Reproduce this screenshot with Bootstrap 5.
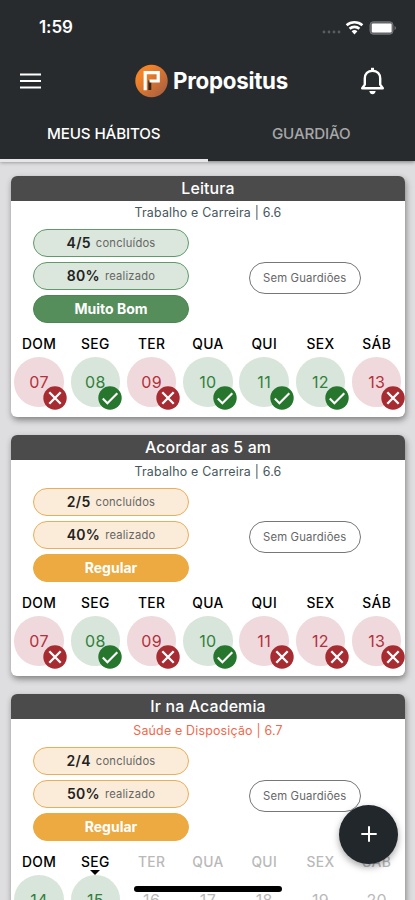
<!DOCTYPE html>
<html lang="pt-BR">
<head>
<meta charset="utf-8">
<meta name="viewport" content="width=device-width, initial-scale=1">
<title>Propositus</title>
<link href="https://cdn.jsdelivr.net/npm/bootstrap@5.3.0/dist/css/bootstrap.min.css" rel="stylesheet">
<style>
html, body { height: 100%; overflow: hidden; }
body { font-family: Inter, "Liberation Sans", sans-serif; background: #dedddf; color: #222; line-height: 1; }
.screen { height: 900px; width: 415px; overflow: hidden; }
.topbar { background: #282b2e; height: 161px; box-shadow: 0 1px 4px rgba(0,0,0,.45); color: #fff; z-index: 2; }
.status { height: 55px; padding: 0 19px 0 39px; }
.clock { font-size: 17px; font-weight: 600; letter-spacing: -.1px; }
.brandrow { height: 52px; padding: 0 30px 0 20px; }
.brand { margin-left: 22px; gap: 5px; }
.brandname { font-size: 22.3px; font-weight: 700; letter-spacing: -.25px; }
.tabs { height: 55px; }
.tab-item { width: 208px; font-size: 15.2px; font-weight: 500; padding-top: 1px; border-bottom: 3px solid transparent; color: #a6a7a8; letter-spacing: -.15px; }
.tab-item.on { color: #fff; border-bottom-color: #e6e5e7; }
.feed { padding: 14.5px 10px 0 11px; gap: 17.5px; }
.habit { height: 241.5px; border-radius: 6px; background: #fff; box-shadow: 1px 3px 6px rgba(0,0,0,.42); flex: none; }
.habit-title { height: 25.5px; padding-top: 1px; background: #4b4b4c; color: #fff; border-radius: 6px 6px 0 0; font-size: 15.9px; font-weight: 500; letter-spacing: .15px; }
.habit-area { height: 22px; padding-top: 2px; font-size: 12.4px; letter-spacing: .2px; color: #46575c; }
.habit-area.health { color: #f0694c; }
.stats { height: 93.5px; margin-top: 6px; }
.pills { width: 156px; margin-left: 22px; gap: 5px; }
.pill { height: 28px; border-radius: 14px; border: 1px solid; font-size: 11.2px; gap: 5px; letter-spacing: .2px; color: #666; }
.pill span { padding-top: 1px; }
.pill b { font-size: 14px; font-weight: 600; color: #222; letter-spacing: .3px; }
.pill.level { color: #fff; font-size: 14px; font-weight: 700; letter-spacing: 0; }
.green .pill { background: #dbe6dc; border-color: #5f9a69; }
.green .pill.level { background: #558d5b; border-color: #4b8752; }
.amber .pill { background: #fbecd9; border-color: #ebad5a; }
.amber .pill.level { background: #ecaa40; border-color: #ecaa40; }
.guard { width: 112.5px; height: 32px; border-radius: 16px; border: 1px solid #777; margin-left: 59.5px; margin-top: 5px; font-size: 11.3px; letter-spacing: .15px; color: #666; }
.days { margin-top: 14.4px; }
.day { width: 56.28px; font-size: 14px; letter-spacing: .35px; }
.day-name { height: 16px; font-weight: 500; font-size: 13.8px; }
.disc { width: 49.5px; height: 49.5px; margin-top: 4.6px; font-size: 16px; }
.done .disc { background: #d8e5da; color: #31803a; }
.miss .disc { background: #efd9dc; color: #b3303c; }
.idle { color: #b9b9b9; }
.flag { width: 24px; height: 24px; right: -3.5px; bottom: -3px; }
.day:nth-child(2) .flag { right: -1.7px; }
.day:nth-child(4) .flag { right: -4px; }
.day:nth-child(5) .flag { right: -4.7px; }
.today { left: 50%; bottom: -4px; margin-left: -5px; width: 10px; height: 5px; }
.fab { left: 339px; top: 804.5px; width: 59px; height: 59px; background: #22272b; box-shadow: 0 3px 7px rgba(0,0,0,.35); z-index: 3; }
.homebar { left: 134px; top: 886px; width: 148px; height: 5.5px; background: #000; z-index: 4; }
</style>
<script src="https://cdn.jsdelivr.net/npm/bootstrap@5.3.0/dist/js/bootstrap.bundle.min.js"></script>
</head>
<body>
<svg width="0" height="0" class="position-absolute">
  <symbol id="check" viewBox="0 0 24 24"><circle cx="12" cy="12" r="11.7" fill="#26762d"/><path d="M4.8 12.6l4.6 4.7L19.3 7.2" fill="none" stroke="#fff" stroke-width="2.1"/></symbol>
  <symbol id="cross" viewBox="0 0 24 24"><circle cx="12" cy="12" r="11.7" fill="#a62c31"/><path d="M6.3 6.3l11.4 11.4M17.7 6.3L6.3 17.7" fill="none" stroke="#fff" stroke-width="2.3"/></symbol>
</svg>
<div class="screen position-relative d-flex flex-column">
  <header class="topbar position-relative flex-shrink-0">
    <div class="status d-flex align-items-center justify-content-between">
      <span class="clock">1:59</span>
      <svg width="76" height="18" viewBox="0 0 76 18">
        <g fill="#5a5d5f"><circle cx="4" cy="13" r="1.4"/><circle cx="9" cy="13" r="1.4"/><circle cx="14" cy="13" r="1.4"/><circle cx="19" cy="13" r="1.4"/></g>
        <g fill="none" stroke="#fff" stroke-width="2.6"><path d="M26.6 6.2a12 12 0 0 1 15.8 0"/><path d="M29.6 9.8a7.2 7.2 0 0 1 9.8 0"/></g>
        <path d="M31.6 12.2a4.4 4.4 0 0 1 5.8 0L34.5 15.5z" fill="#fff"/>
        <rect x="50" y="2.8" width="23" height="12.4" rx="3.2" fill="#606365" stroke="#737577"/><rect x="51.8" y="4.5" width="19.8" height="9" rx="1.2" fill="#fff"/><path d="M74.600 7v4q1.200-.6 1.200-2t-1.200-2z" fill="#808284"/>
      </svg>
    </div>
    <div class="brandrow d-flex align-items-center justify-content-between">
      <svg width="21" height="16" viewBox="0 0 21 16" stroke="#fff" stroke-width="2"><path d="M0 1.500h21M0 8h21M0 14.500h21"/></svg>
      <div class="brand d-flex align-items-center">
        <svg width="33" height="34" viewBox="0 0 33 34">
          <defs><linearGradient id="og" x1="0" y1="0" x2="1" y2="1"><stop offset=".25" stop-color="#f38328"/><stop offset=".8" stop-color="#b5653d"/></linearGradient></defs>
          <circle cx="16.5" cy="17" r="16.2" fill="url(#og)"/>
          <path d="M14.800 26V16.500" fill="none" stroke="#3a2518" stroke-width="3"/>
          <path d="M10.200 26.300V8.700H23.200V17H14.500" fill="none" stroke="#fff" stroke-width="3.200"/>
        </svg>
        <span class="brandname">Propositus</span>
      </div>
      <svg width="25" height="28" viewBox="0 0 25 28" fill="none" stroke="#fff" stroke-width="2.4"><path d="M2.200 21.200h20.600l-2.600-3.600V11.500c0-4.500-3-7.800-7.700-7.800s-7.700 3.300-7.700 7.800v6.100z" stroke-linejoin="round"/><path d="M12.500.8v3" stroke-width="3"/><path d="M9.300 24h6.400q-.8 3.200-3.200 3.200T9.300 24z" fill="#fff" stroke="none"/></svg>
    </div>
    <nav class="tabs d-flex">
      <div class="tab-item on d-flex align-items-center justify-content-center">MEUS HÁBITOS</div>
      <div class="tab-item d-flex align-items-center justify-content-center">GUARDIÃO</div>
    </nav>
  </header>
  <main class="feed d-flex flex-column" id="feed"></main>
  <button class="fab btn rounded-circle border-0 p-0 position-absolute d-flex align-items-center justify-content-center" aria-label="+">
    <svg width="18" height="18" viewBox="0 0 18 18" stroke="#fff" stroke-width="2"><path d="M9 1.300v15.400M1.300 9h15.400"/></svg>
  </button>
  <div class="homebar rounded-pill position-absolute"></div>
</div>
<script>
// Day states: x = missed, v = done, o = done without a flag, - = upcoming
const names = ['DOM', 'SEG', 'TER', 'QUA', 'QUI', 'SEX', 'SÁB'];
const habits = [
  { title: 'Leitura', area: 'Trabalho e Carreira | 6.6', count: '4/5', pct: '80%', level: 'Muito Bom', tone: 'green', first: 7, state: 'xvxvvvx' },
  { title: 'Acordar as 5 am', area: 'Trabalho e Carreira | 6.6', count: '2/5', pct: '40%', level: 'Regular', tone: 'amber', first: 7, state: 'xvxvxxx' },
  { title: 'Ir na Academia', area: 'Saúde e Disposição | 6.7', health: true, count: '2/4', pct: '50%', level: 'Regular', tone: 'amber', first: 14, state: 'oo-----', today: 1 }
];
const kind = { x: 'miss', v: 'done', o: 'done', '-': 'idle' };
const icon = { x: 'cross', v: 'check' };
const center = 'd-flex align-items-center justify-content-center';
const day = (h, name, i) => {
  const s = h.state[i];
  const kindClass = kind[s];
  return `<div class="day d-flex flex-column align-items-center ${kindClass}">
    <div class="day-name position-relative ${center} ${s === '-' ? '' : 'text-black'}">${name}${h.today === i ? '<svg class="today position-absolute" viewBox="0 0 10 5"><path d="M0 0h10L5 5z"/></svg>' : ''}</div>
    <div class="disc rounded-circle position-relative ${center}">${String(h.first + i).padStart(2, '0')}${icon[s] ? `<svg class="flag position-absolute"><use href="#${icon[s]}"/></svg>` : ''}</div>
  </div>`;
};
document.getElementById('feed').innerHTML = habits.map(h => `
<section class="habit">
  <div class="habit-title ${center}">${h.title}</div>
  <div class="habit-area ${center} ${h.health ? 'health' : ''}">${h.area}</div>
  <div class="stats d-flex align-items-center ${h.tone}">
    <div class="pills d-flex flex-column">
      <div class="pill ${center}"><b>${h.count}</b><span>concluídos</span></div>
      <div class="pill ${center}"><b>${h.pct}</b><span>realizado</span></div>
      <div class="pill level ${center}">${h.level}</div>
    </div>
    <div class="guard ${center}">Sem Guardiões</div>
  </div>
  <div class="days d-flex">${names.map((n, i) => day(h, n, i)).join('')}</div>
</section>`).join('');
</script>
</body>
</html>
